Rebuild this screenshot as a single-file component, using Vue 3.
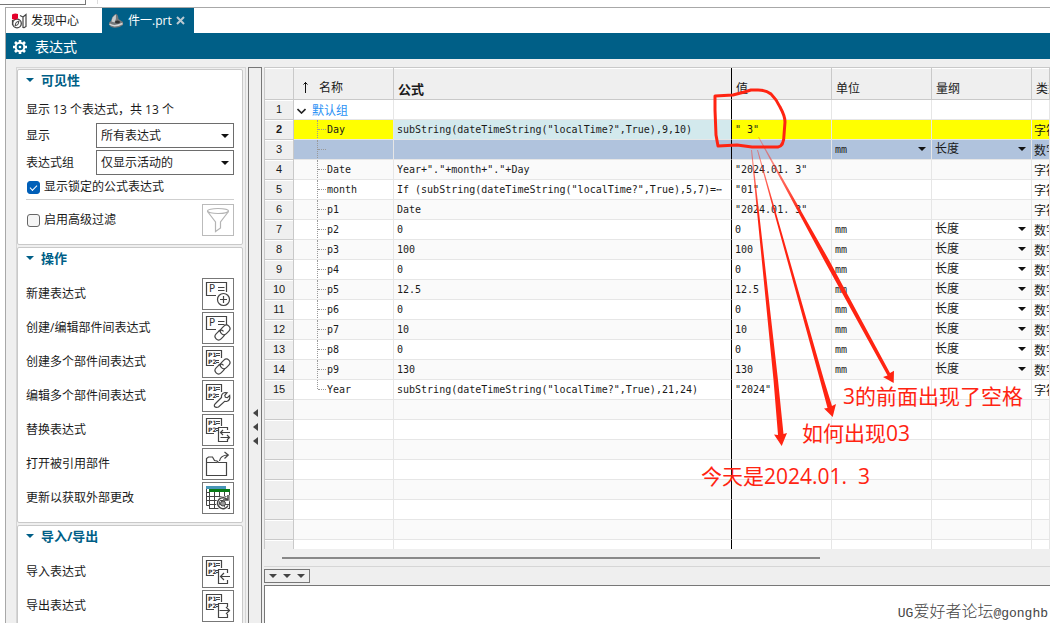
<script setup>
import { ref } from 'vue'

const filterMode = ref('所有表达式')
const groupMode = ref('仅显示活动的')
const showLocked = ref(true)
const advanced = ref(false)

const actions = [
  { label: '新建表达式', icon: 'new' },
  { label: '创建/编辑部件间表达式', icon: 'link' },
  { label: '创建多个部件间表达式', icon: 'multilink' },
  { label: '编辑多个部件间表达式', icon: 'wrench' },
  { label: '替换表达式', icon: 'replace' },
  { label: '打开被引用部件', icon: 'folder' },
  { label: '更新以获取外部更改', icon: 'refresh' },
]
const transfers = [
  { label: '导入表达式', icon: 'import' },
  { label: '导出表达式', icon: 'export' },
]
const sections = [
  { title: '操作', items: actions },
  { title: '导入/导出', items: transfers },
]

const num = (name, value) => ({ name, formula: value, value, unit: 'mm', dim: '长度', type: '数字' })
const str = (name, formula, value) => ({ name, formula, value, unit: '', dim: '', type: '字符串' })
const rows = [
  str('Day', 'subString(dateTimeString("localTime?",True),9,10)', '" 3"'),
  num('', ''),
  str('Date', 'Year+"."+month+"."+Day', '"2024.01. 3"'),
  str('month', 'If (subString(dateTimeString("localTime?",True),5,7)=⋯', '"01"'),
  str('p1', 'Date', '"2024.01. 3"'),
  num('p2', '0'),
  num('p3', '100'),
  num('p4', '0'),
  num('p5', '12.5'),
  num('p6', '0'),
  num('p7', '10'),
  num('p8', '0'),
  num('p9', '130'),
  str('Year', 'subString(dateTimeString("localTime?",True),21,24)', '"2024"'),
]
const blanks = 8
</script>

<template>
  <div class="app">
    <div class="strip"><span class="strip-box"></span><span class="strip-mark"></span></div>
    <div class="window">
      <nav class="tabs">
        <button class="tab">
          <svg width="16" height="16" viewBox="0 0 16 16">
            <path d="M9 2.5l3 1.5v11M12 4l3-2.500v12l-2.500 1.500M1.500 7v5" fill="none" stroke="#444" stroke-width="1.200" />
            <circle cx="6" cy="10.500" r="4.300" fill="#fff" stroke="#444" stroke-width="1.300" />
            <path d="M8 8L7 11.500 4 13l1-3.500z" fill="none" stroke="#444" />
            <path d="M1 1.500Q4 0 7 1v4.500Q4 7.500 1 6z" fill="#e4002b" />
          </svg>
          <span>发现中心</span>
        </button>
        <button class="tab active">
          <svg width="16" height="16" viewBox="0 0 16 16">
            <path d="M1 11Q0.500 9 3 8Q4 3 7.500 1Q10 0.500 10.500 6L15 9v3Q11 15.500 5 14.500Q1.500 13.500 1 11z" fill="#73777a" />
            <path d="M3.500 8.500Q4 3.500 8 1.500Q8.500 6 6.500 9.500z" fill="#c9cccd" />
            <path d="M1.500 11Q6 14.500 14.500 10.500" fill="none" stroke="#d4d6d7" stroke-width="1.500" />
            <ellipse cx="9.500" cy="9" rx="2.500" ry="1.500" fill="#333" />
          </svg>
          <span>件一.prt</span>
          <svg width="9" height="9" viewBox="0 0 9 9"><path d="M1 1l7 7M8 1l-7 7" stroke="#b9c9d1" stroke-width="2" /></svg>
        </button>
      </nav>
      <header class="title">
        <svg width="14" height="14" viewBox="0 0 14 14">
          <path d="M7 0v14M0 7h14M2 2l10 10M12 2L2 12" stroke="#fff" stroke-width="2.600" />
          <circle cx="7" cy="7" r="4.300" fill="#005f87" stroke="#fff" stroke-width="2" />
          <circle cx="7" cy="7" r="1.300" fill="#fff" />
        </svg>
        <h1>表达式</h1>
      </header>

      <div class="body">
        <aside class="side">
          <section class="group">
            <h2><i class="caret"></i>可见性</h2>
            <p class="count">显示 13 个表达式，共 13 个</p>
            <div class="field">
              <label for="show">显示</label>
              <span class="drop">
                <select id="show" v-model="filterMode"><option>所有表达式</option></select>
              </span>
            </div>
            <div class="field">
              <label for="grp">表达式组</label>
              <span class="drop">
                <select id="grp" v-model="groupMode"><option>仅显示活动的</option></select>
              </span>
            </div>
            <label class="check"><input v-model="showLocked" type="checkbox" />显示锁定的公式表达式</label>
            <div class="advanced">
              <label class="check"><input v-model="advanced" type="checkbox" />启用高级过滤</label>
              <button class="tool dim" disabled aria-label="高级过滤">
                <svg width="32" height="32" viewBox="0 0 32 32" fill="none" stroke="#b4b4b4" stroke-width="1.200">
                  <ellipse cx="16" cy="7" rx="10.500" ry="2.500" />
                  <path d="M5.500 7.500L13.500 18v9.500l5-3.500V18L26.500 7.500" />
                </svg>
              </button>
            </div>
          </section>

          <section v-for="s in sections" :key="s.title" class="group">
            <h2><i class="caret"></i>{{ s.title }}</h2>
            <div v-for="a in s.items" :key="a.label" class="action">
              <label :for="a.icon">{{ a.label }}</label>
              <button :id="a.icon" class="tool">
                <svg width="32" height="32" viewBox="0 0 32 32" fill="none" stroke="#444" stroke-width="1.200">
                  <template v-if="a.icon === 'new' || a.icon === 'link'">
                    <path d="M14 17.500H4.500v-13h20V14" />
                    <path d="M16 9.500h6.500M16 12.500h6.500" />
                    <text x="7" y="14" font-size="10">P</text>
                  </template>
                  <template v-else-if="a.icon !== 'folder' && a.icon !== 'refresh'">
                    <path d="M12 19.500H4.500v-15h15V12" />
                    <path d="M14 7.500h4M14 9.500h4M14 14.500h3M14 16.500h3" stroke-width="1" />
                    <text x="6" y="11" font-size="6" font-weight="700">P1</text>
                    <text x="6" y="18" font-size="6" font-weight="700">P2</text>
                  </template>
                  <g v-if="a.icon === 'new'">
                    <circle cx="21.500" cy="21.500" r="6" fill="#fff" /><path d="M21.500 18v7M18 21.500h7" />
                  </g>
                  <g v-if="a.icon === 'link' || a.icon === 'multilink'" transform="rotate(-45 20.500 20.500)">
                    <rect x="11.500" y="17" width="10.500" height="7" rx="3.500" fill="#fff" />
                    <rect x="19" y="17" width="10.500" height="7" rx="3.500" fill="#fff" />
                    <path d="M22 20.500q0-3.500-3.500-3.500" />
                  </g>
                  <path
                    v-if="a.icon === 'wrench'"
                    fill="#fff"
                    d="M13 24l6.500-6.500q-.5-4 3.500-5l2 .2-2.200 2.600.6 2 2 .4 2.300-2.200q.8 5-3.200 6l-1.800-.2L16.500 27q-2.500 1-4-.5-.6-1.500.5-2.500z"
                  />
                  <g v-if="a.icon === 'replace'">
                    <path d="M16.500 27.500v-14h6l3 3v11z" fill="#fff" stroke="none" />
                    <path d="M25.500 16v-2.500h-9v14h9V26" />
                    <path d="M28 18.500H18.500M21 16l-2.500 2.500L21 21" />
                    <path d="M18.500 23.500H27.500M25 21l2.500 2.500L25 26" />
                  </g>
                  <g v-if="a.icon === 'folder'">
                    <path d="M4.500 27.500v-17L6.500 9h4l2 3.500L15 13l1.500 1.500h8v13zM4.500 14.500h11" />
                    <path d="M17.500 13q1-6 8.500-6M22.500 4l3.800 3-3.800 3.500" />
                  </g>
                  <g v-if="a.icon === 'refresh'" stroke-width="1">
                    <path d="M4.500 5v18.500H8" />
                    <path d="M4 5.500h20" stroke="#4996b8" stroke-width="3" />
                    <rect x="7.500" y="8.500" width="20" height="18" fill="#fff" />
                    <path d="M7 8.500h21" stroke="#087a17" stroke-width="3" />
                    <path d="M7.500 14.500h20M7.500 18.500h20M7.500 22.500h20M12.500 10v17M17.500 10v17M22.500 10v17M4.500 10.500h3M4.500 14.500h3M4.500 18.500h3" />
                    <path d="M25.500 18A5.500 5.500 0 1 0 26 23.500M26 13v5h-5" stroke="#fff" stroke-width="3" />
                    <path d="M25.500 18A5.500 5.500 0 1 0 26 23.500M26 13v5h-5" stroke-width="1.500" />
                    <circle cx="21" cy="21.500" r="2.500" fill="#999" />
                  </g>
                  <g v-if="a.icon === 'import' || a.icon === 'export'">
                    <path d="M16.500 13.500h9v14h-9z" fill="#fff" stroke="none" />
                    <path d="M25.500 17v-3.500h-9v14h9V24" />
                    <path v-if="a.icon === 'import'" d="M28 20.500h-9M22 17l-3.500 3.500L22 24" />
                    <path v-else d="M17.500 20.500h10M24 17l3.500 3.500L24 24" />
                  </g>
                </svg>
              </button>
            </div>
          </section>
        </aside>

        <div class="splitter"><i></i><i></i><i></i></div>

        <main class="main">
          <div class="grid-wrap">
            <table>
              <colgroup>
                <col class="c-no" /><col class="c-std" /><col class="c-formula" /><col class="c-std" /><col class="c-std" /><col class="c-std" /><col />
              </colgroup>
              <thead>
                <tr>
                  <th class="no"></th>
                  <th class="h-name"><svg width="7" height="12" viewBox="0 0 7 12"><path d="M3.500 12V1M1.500 3.500l2-2 2 2" fill="none" stroke="#111" /></svg>名称</th>
                  <th class="formula h-formula">公式</th>
                  <th>值</th><th>单位</th><th>量纲</th><th>类型</th>
                </tr>
              </thead>
              <tbody>
                <tr>
                  <td class="no">1</td>
                  <td class="root"><svg width="9" height="6" viewBox="0 0 9 6"><path d="M.5 1l4 4 4-4" fill="none" stroke="#222" stroke-width="1.600" /></svg>默认组</td>
                  <td class="formula"></td><td></td><td></td><td></td><td></td>
                </tr>
                <tr v-for="(r, i) in rows" :key="i" :class="{ current: i === 0, picked: i === 1 }">
                  <td class="no">{{ i + 2 }}</td>
                  <td class="leaf" :class="{ last: i === rows.length - 1 }">{{ r.name }}</td>
                  <td class="formula">{{ r.formula }}</td>
                  <td>{{ r.value }}</td>
                  <td>
                    <span v-if="i === 1" class="drop cell unit"><select aria-label="单位"><option>mm</option></select></span>
                    <template v-else>{{ r.unit }}</template>
                  </td>
                  <td>
                    <span v-if="r.dim" class="drop cell"><select aria-label="量纲"><option>{{ r.dim }}</option></select></span>
                  </td>
                  <td>{{ r.type }}</td>
                </tr>
                <tr v-for="b in blanks" :key="'b' + b">
                  <td class="no"></td><td></td><td class="formula"></td><td></td><td></td><td></td><td></td>
                </tr>
              </tbody>
            </table>
          </div>
          <div class="scroll"><span></span></div>
          <button class="toggle" aria-label="展开"><i></i><i></i><i></i></button>
          <div class="output">
            <p class="mark"><span>UG</span>爱好者论坛<span>@gonghb</span></p>
          </div>
        </main>
      </div>
    </div>

    <div class="notes">
      <svg width="1" height="1">
        <defs>
          <linearGradient id="fade" gradientUnits="userSpaceOnUse" x1="0" y1="135" x2="0" y2="215">
            <stop offset="0" stop-color="#ff2412" stop-opacity="0.300" />
            <stop offset="1" stop-color="#ff2412" />
          </linearGradient>
        </defs>
        <path
          d="M715 96L733 95Q745 92 751 90L758 90Q766 90 771 94Q777 100 780 107Q785 116 785 122L784 135Q784 146 778 147L752 147L737 145L718 146L716 135L715 110Z"
          fill="none" stroke="#ff2412" stroke-width="3" stroke-linejoin="round"
        />
        <g fill="url(#fade)">
          <path d="M751 150h1L778 380L783.500 434l3.500-1-5.300 13L774 434.500l4 .5L773.500 380z" />
          <path d="M757 150h1L824 380L832 406l4-2-3.300 13L824 408.500l3.500-.5L820 380z" />
          <path d="M758 137h1L829 260L890 373l4-2.300L893.700 383 883 377l4.500-1.500L825 262z" />
        </g>
      </svg>
      <p class="n1">3的前面出现了空格</p>
      <p class="n2">如何出现03</p>
      <p class="n3">今天是2024.01.&nbsp; 3</p>
    </div>
  </div>
</template>

<style>
body { overflow: hidden; }
</style>

<style scoped>
* { box-sizing: border-box; margin: 0; }
.app {
  position: relative;
  height: 100vh;
  display: flex;
  flex-direction: column;
  background: #fff;
  color: #1a1a1a;
  font: 12px/16px "Open Sans", "Noto Sans CJK SC", sans-serif;
}
button, select, input { font: inherit; color: inherit; }
.strip { flex: none; height: 7px; display: flex; }
.strip-box { width: 86px; height: 5px; border: solid #777; border-width: 0 1px 1px 0; }
.strip-mark { width: 12px; height: 4px; border-right: 1px solid #ddd; }
.window {
  flex: 1;
  min-height: 0;
  display: flex;
  flex-direction: column;
  margin-left: 5px;
  border: solid #a8a8a8;
  border-width: 1px 0 0 1px;
}
.tabs { display: flex; height: 25px; }
.tab { display: flex; align-items: center; gap: 4px; width: 96px; padding: 0 5px; border: 0; background: #fff; white-space: nowrap; }
.tab svg { flex: none; }
.tab.active { width: 92px; padding: 0 6px; background: #005f87; color: #fff; }
.title { display: flex; align-items: center; gap: 8px; height: 26px; padding: 2px 7px 0; background: #005f87; color: #fff; }
.title h1 { font-size: 14px; font-weight: 400; line-height: 20px; }
.body { flex: 1; min-height: 0; display: flex; gap: 2px; padding: 8px 0 0 10px; background: #efefef; }

.side {
  flex: none;
  width: 230px;
  display: flex;
  flex-direction: column;
  gap: 2px;
  overflow: hidden;
  padding: 1px 2px 0 0;
  border: 1px solid #d6d6d6;
  border-bottom: 0;
}
.group { flex: none; padding: 2px 8px 8px; background: #fff; border: 1px solid #c9c9c9; border-radius: 2px; }
.group h2 { display: flex; align-items: center; gap: 7px; font-size: 13px; line-height: 16px; font-weight: 700; color: #005f87; margin-bottom: 12px; }
.caret { border: 4px solid transparent; border-top-color: #005f87; border-bottom: 0; }
.count { margin: 14px 0 5px; }
.field { display: flex; align-items: center; justify-content: space-between; height: 25px; margin-top: 2px; }
.drop { position: relative; display: block; }
.drop::after {
  content: "";
  position: absolute;
  right: 5px;
  top: 50%;
  margin-top: -2px;
  border: 4px solid transparent;
  border-top-color: #111;
  border-bottom: 0;
  pointer-events: none;
}
.drop select { appearance: none; display: block; width: 138px; height: 25px; padding: 0 4px; border: 1px solid #6d6d6d; border-radius: 0; background: #fff; }
.check { display: flex; align-items: center; gap: 4px; height: 24px; }
.check input {
  appearance: none;
  display: grid;
  place-items: center;
  width: 13px;
  height: 13px;
  margin: 0 0 0 1px;
  border: 1px solid #666;
  border-radius: 3px;
  background: #f5f5f5;
}
.check input:checked { background: #005fb8; border-color: #005fb8; }
.check input:checked::after { content: ""; width: 6px; height: 3px; border: solid #fff; border-width: 0 0 1px 1px; transform: rotate(-45deg); }
.advanced { display: flex; align-items: center; justify-content: space-between; padding-top: 4px; border-top: 1px solid #cfcfcf; }
.tool { width: 32px; height: 32px; padding: 0; border: 1px solid #777; background: #fff; display: grid; place-content: center; overflow: hidden; }
.tool.dim { border-color: #bbb; }
.tool text { fill: #333; stroke: none; font-family: "DejaVu Sans", sans-serif; }
.action { display: flex; align-items: center; justify-content: space-between; margin-bottom: 2px; }
.action:last-child { margin-bottom: 0; }

.splitter { flex: none; width: 14px; display: flex; flex-direction: column; align-items: center; gap: 6px; padding-top: 341px; border: 1px solid #777; border-bottom: 0; }
.splitter i { border: 4px solid transparent; border-right: 5px solid #444; border-left: 0; }

.main { flex: 1; min-width: 0; display: flex; flex-direction: column; }
.grid-wrap { flex: 1; min-height: 0; overflow: hidden; border: solid #c9c9c9; border-width: 1px 0 0 1px; margin-bottom: 1px; }
table { width: 100%; table-layout: fixed; border-collapse: separate; border-spacing: 0; }
.c-no { width: 29px; }
.c-std { width: 100px; }
.c-formula { width: 338px; }
th {
  height: 32px;
  padding: 0 3px 2px 4px;
  vertical-align: bottom;
  text-align: left;
  font-weight: 400;
  background: #efefef;
  border: solid #c9c9c9;
  border-width: 0 1px 1px 0;
  box-shadow: inset 0 1px #fff;
  overflow: hidden;
  white-space: nowrap;
}
.h-name svg { margin: 0 10px 4px 4px; vertical-align: middle; }
.h-formula { font-size: 13px; font-weight: 700; }
td {
  height: 20px;
  padding: 0 3px;
  font: 10px/19px "DejaVu Sans Mono", "Noto Sans CJK SC", monospace;
  white-space: pre;
  overflow: hidden;
  background: #fff;
  border: solid #e6e6e6;
  border-width: 0 1px 1px 0;
}
td:last-child, td.root { font-size: 12px; font-family: "Noto Sans CJK SC", sans-serif; line-height: 18px; }
td:last-child { padding-left: 2px; }
tr:nth-child(even) td { background: #fafafa; }
th.formula, td.formula { border-right-color: #000; }
tr td.no, tbody tr:nth-child(even) td.no {
  text-align: center;
  background: #efefef;
  border-color: #c9c9c9;
  box-shadow: inset 0 1px #fff;
  font: 11px/19px "Liberation Sans", sans-serif;
}
td.root { color: #2a91f5; }
td.root svg { margin-right: 6px; vertical-align: middle; }
td.leaf { position: relative; padding-left: 33px; }
td.leaf::before { content: ""; position: absolute; left: 23px; top: 0; bottom: -1px; border-left: 1px dotted #999; }
td.leaf.last::before { bottom: 10px; }
td.leaf::after { content: ""; position: absolute; left: 24px; top: 9px; width: 8px; border-top: 1px dotted #999; }
tbody tr.current td { background: #ff0; }
tbody tr.current td.formula { background: #d3e9ed; }
tbody tr.current td.no { background: #efefef; font-weight: 700; }
tbody tr.picked td { background: #b0c3dd; }
tbody tr.picked td.no { background: #efefef; }
.drop.cell select { width: 100%; height: 19px; padding: 0; border: 0; background: transparent; font-size: 12px; }
.drop.cell.unit select { font-size: 10px; }
.drop.cell::after { right: 2px; margin-top: -3px; }

.scroll { flex: none; height: 17px; padding: 7px 0 0 18px; border-bottom: 1px solid #d6d6d6; }
.scroll span { display: block; width: 70%; height: 2px; background: #888; }
.toggle { flex: none; align-self: flex-start; display: flex; align-items: center; gap: 6px; width: 46px; height: 14px; margin: 2px 0; padding: 0 4px; border: 1px solid #777; background: #efefef; }
.toggle i { border: 4px solid transparent; border-top-color: #444; border-bottom: 0; }
.output { flex: none; height: 38px; padding-top: 15px; border: solid #777; border-width: 1px 0 0 1px; background: #fff; }
.mark { text-align: right; padding-right: 2px; font-size: 16px; line-height: 20px; color: #444; font-weight: 300; white-space: nowrap; }
.mark span { font: 13px/20px "Liberation Mono", monospace; }

.notes { position: absolute; inset: 0; pointer-events: none; color: #ff2412; font-size: 21px; line-height: 28px; white-space: nowrap; }
.notes svg { display: block; overflow: visible; }
.notes p { position: absolute; }
.n1 { left: 843px; top: 382px; }
.n2 { left: 802px; top: 419px; }
.n3 { left: 701px; top: 462px; }
</style>
